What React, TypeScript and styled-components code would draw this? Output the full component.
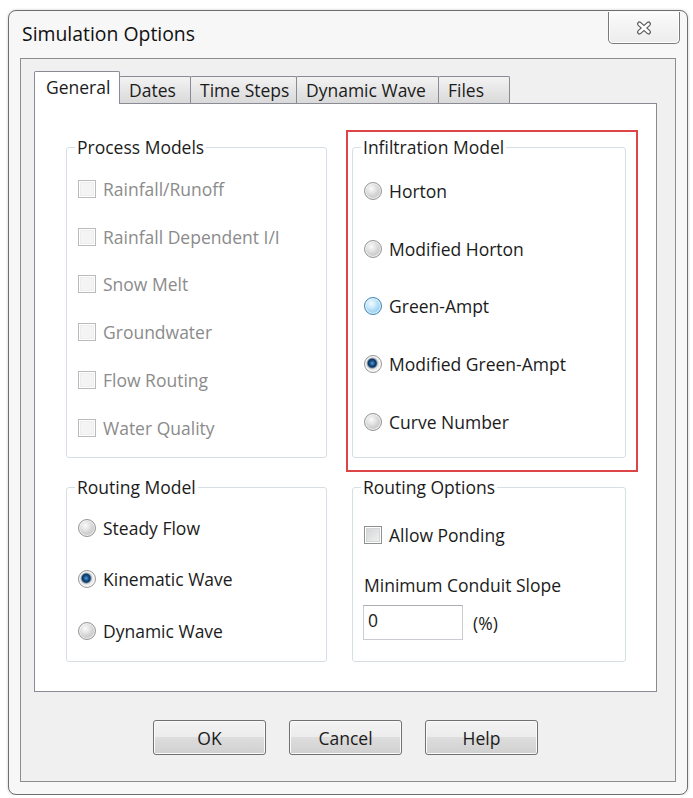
import styled, { createGlobalStyle } from "styled-components";

const GlobalStyle = createGlobalStyle`
  html, body {
    margin: 0;
    background: #ffffff;
  }
  body {
    font-family: "Open Sans", "Noto Sans", sans-serif;
    font-size: 17.5px;
    color: #1b1b1b;
  }
`;

const Window = styled.div`
  margin: 10px 0 0 8px;
  width: 680px;
  height: 785px;
  box-sizing: border-box;
  border: 1px solid #6f6f6f;
  border-radius: 8px;
  background: #f7f7f7;
  box-shadow: 0 0 3px rgba(0, 0, 0, 0.2);
  padding: 0 11px 12px;
  display: flex;
  flex-direction: column;
`;

const TitleBar = styled.div`
  height: 47px;
  display: flex;
  justify-content: space-between;
  align-items: flex-start;
`;

const Title = styled.div`
  margin-top: 10px;
  padding-left: 2px;
  font-size: 19.4px;
  line-height: 26px;
  color: #111;
`;

const CloseButton = styled.div`
  width: 72px;
  height: 32px;
  margin: 1px -4px 0 0;
  box-sizing: border-box;
  border: 1px solid #7a7a7a;
  border-top: none;
  border-radius: 0 0 5px 5px;
  background: linear-gradient(#fbfbfb, #ececec);
  box-shadow: inset 0 0 0 1px #ffffff;
  display: flex;
  align-items: center;
  justify-content: center;
`;

const ClientArea = styled.div`
  flex: 1;
  border: 1px solid #8d8d8d;
  background: #f0f0f0;
  padding: 12px 18px 0 13px;
  display: flex;
  flex-direction: column;
`;

const TabStrip = styled.div`
  height: 32px;
  display: flex;
  align-items: flex-end;
`;

const Tab = styled.div<{ $w: number; $active?: boolean }>`
  width: ${(p) => p.$w}px;
  height: ${(p) => (p.$active ? 33 : 27)}px;
  margin-bottom: ${(p) => (p.$active ? -1 : 0)}px;
  margin-left: -1px;
  box-sizing: border-box;
  border: 1px solid #898c95;
  border-bottom: none;
  border-radius: 2px 2px 0 0;
  background: ${(p) =>
    p.$active ? "#ffffff" : "linear-gradient(#f3f3f3, #e6e6e6 50%, #d9d9d9)"};
  padding-left: ${(p) => (p.$active ? 11 : 9)}px;
  padding-bottom: ${(p) => (p.$active ? 2 : 0)}px;
  display: flex;
  align-items: center;
  position: relative;
  z-index: ${(p) => (p.$active ? 2 : 1)};
  white-space: nowrap;

  &:first-child {
    margin-left: 0;
  }
`;

const TabPage = styled.div`
  position: relative;
  z-index: 0;
  height: 589px;
  box-sizing: border-box;
  border: 1px solid #898c95;
  background: #ffffff;
  padding: 32px 30px 0 31px;
  display: grid;
  grid-template-columns: 261px 274px;
  grid-template-rows: 322px 186px;
  column-gap: 25px;
  row-gap: 18px;
  align-content: start;
`;

const Group = styled.fieldset`
  margin: 0;
  padding: 0 0 0 8px;
  min-width: 0;
  height: 100%;
  box-sizing: border-box;
  border: 1px solid #d5dfe5;
  border-radius: 3px;
`;

const Legend = styled.legend`
  padding: 0 2px;
  line-height: 22px;
  color: #1b1b1b;
`;

const Highlight = styled.div`
  position: relative;

  &::after {
    content: "";
    position: absolute;
    top: -6px;
    left: -6px;
    right: -12px;
    bottom: -14px;
    border: 2px solid #dd4447;
    pointer-events: none;
  }
`;

const Rows = styled.div<{ $pt: number }>`
  padding: ${(p) => p.$pt}px 0 0 3px;
  display: flex;
  flex-direction: column;
`;

const Row = styled.div<{ $h: number; $disabled?: boolean }>`
  height: ${(p) => p.$h}px;
  display: flex;
  align-items: center;
  gap: 7px;
  color: ${(p) => (p.$disabled ? "#8b8b8b" : "#1b1b1b")};
`;

const CheckBox = styled.span<{ $disabled?: boolean }>`
  width: 18px;
  height: 18px;
  flex: none;
  box-sizing: border-box;
  border: 1px solid ${(p) => (p.$disabled ? "#bababa" : "#8e8f8f")};
  background: ${(p) =>
    p.$disabled
      ? "#f4f4f4"
      : "linear-gradient(135deg, #cfd1d4, #f4f4f4)"};
  box-shadow: inset 0 0 0 1px #ffffff,
    inset 0 0 0 2px ${(p) => (p.$disabled ? "#ededed" : "#d6d6d6")};
`;

const radioFill = {
  off: "radial-gradient(circle at 40% 35%, #fbfbfb 0, #e6e6e6 4px, #cfcfcf 8px)",
  hot: "radial-gradient(circle at 40% 35%, #f2faff 0, #cdebfb 4px, #a5d6f3 8px)",
  on: "radial-gradient(circle at 45% 45%, #5f9fd6 0, #1d5b95 2px, #0b335f 4px, #8ea0b0 5px, #e4e4e4 6px, #f4f4f4 8px)",
};

const Radio = styled.span<{ $state: "off" | "on" | "hot" }>`
  width: 18px;
  height: 18px;
  flex: none;
  box-sizing: border-box;
  border-radius: 50%;
  border: 1px solid ${(p) => (p.$state === "hot" ? "#3f83b6" : "#969696")};
  background: ${(p) => radioFill[p.$state]};
  box-shadow: inset 0 0 0 1px rgba(255, 255, 255, 0.7);
`;

const FieldLabel = styled.div`
  margin: 19px 0 0 0;
  line-height: 22px;
`;

const InputRow = styled.div`
  margin: 9px 0 0 -1px;
  display: flex;
  align-items: center;
  gap: 10px;
`;

const TextInput = styled.input`
  width: 100px;
  height: 35px;
  box-sizing: border-box;
  margin: 0;
  border: 1px solid #c9ccd2;
  border-top-color: #abadb3;
  padding: 0 4px 6px;
  font: inherit;
  color: #1b1b1b;
  background: #ffffff;
  outline: none;
`;

const ButtonRow = styled.div`
  margin-top: 28px;
  display: flex;
  justify-content: center;
  gap: 23px;
`;

const Button = styled.button`
  width: 113px;
  height: 35px;
  margin: 0;
  padding: 0;
  border: 1px solid #707070;
  border-radius: 3px;
  background: linear-gradient(#f3f3f3 0%, #ececec 50%, #dddddd 50%, #d0d0d0 100%);
  box-shadow: inset 0 0 0 1px #fbfbfb;
  font: inherit;
  color: #1b1b1b;
`;

const CloseGlyph = () => (
  <svg width="22" height="16" viewBox="0 0 22 16">
    <path
      d="M6.5 4 L15.5 12 M15.5 4 L6.5 12"
      stroke="#5a5a5a"
      strokeWidth="5"
      strokeLinecap="round"
      fill="none"
    />
    <path
      d="M6.5 4 L15.5 12 M15.5 4 L6.5 12"
      stroke="#ffffff"
      strokeWidth="2.6"
      strokeLinecap="round"
      fill="none"
    />
  </svg>
);

const processModels = [
  "Rainfall/Runoff",
  "Rainfall Dependent I/I",
  "Snow Melt",
  "Groundwater",
  "Flow Routing",
  "Water Quality",
];

const infiltration: { label: string; state: "off" | "on" | "hot" }[] = [
  { label: "Horton", state: "off" },
  { label: "Modified Horton", state: "off" },
  { label: "Green-Ampt", state: "hot" },
  { label: "Modified Green-Ampt", state: "on" },
  { label: "Curve Number", state: "off" },
];

const routing: { label: string; state: "off" | "on" }[] = [
  { label: "Steady Flow", state: "off" },
  { label: "Kinematic Wave", state: "on" },
  { label: "Dynamic Wave", state: "off" },
];

const tabs = [
  { label: "General", w: 86 },
  { label: "Dates", w: 72 },
  { label: "Time Steps", w: 107 },
  { label: "Dynamic Wave", w: 143 },
  { label: "Files", w: 72 },
];

export default function App() {
  return (
    <>
      <GlobalStyle />
      <Window>
        <TitleBar>
          <Title>Simulation Options</Title>
          <CloseButton>
            <CloseGlyph />
          </CloseButton>
        </TitleBar>
        <ClientArea>
          <TabStrip>
            {tabs.map((t, i) => (
              <Tab key={t.label} $w={t.w} $active={i === 0}>
                {t.label}
              </Tab>
            ))}
          </TabStrip>
          <TabPage>
            <Group>
              <Legend>Process Models</Legend>
              <Rows $pt={7}>
                {processModels.map((m) => (
                  <Row key={m} $h={47.8} $disabled>
                    <CheckBox $disabled />
                    {m}
                  </Row>
                ))}
              </Rows>
            </Group>

            <Highlight>
              <Group>
                <Legend>Infiltration Model</Legend>
                <Rows $pt={4}>
                  {infiltration.map((m) => (
                    <Row key={m.label} $h={57.8}>
                      <Radio $state={m.state} />
                      {m.label}
                    </Row>
                  ))}
                </Rows>
              </Group>
            </Highlight>

            <Group>
              <Legend>Routing Model</Legend>
              <Rows $pt={4}>
                {routing.map((m) => (
                  <Row key={m.label} $h={51.5}>
                    <Radio $state={m.state} />
                    {m.label}
                  </Row>
                ))}
              </Rows>
            </Group>

            <Group>
              <Legend>Routing Options</Legend>
              <Rows $pt={17}>
                <Row $h={40}>
                  <CheckBox />
                  Allow Ponding
                </Row>
                <FieldLabel>Minimum Conduit Slope</FieldLabel>
                <InputRow>
                  <TextInput defaultValue="0" readOnly />
                  <span>(%)</span>
                </InputRow>
              </Rows>
            </Group>
          </TabPage>
          <ButtonRow>
            <Button>OK</Button>
            <Button>Cancel</Button>
            <Button>Help</Button>
          </ButtonRow>
        </ClientArea>
      </Window>
    </>
  );
}
